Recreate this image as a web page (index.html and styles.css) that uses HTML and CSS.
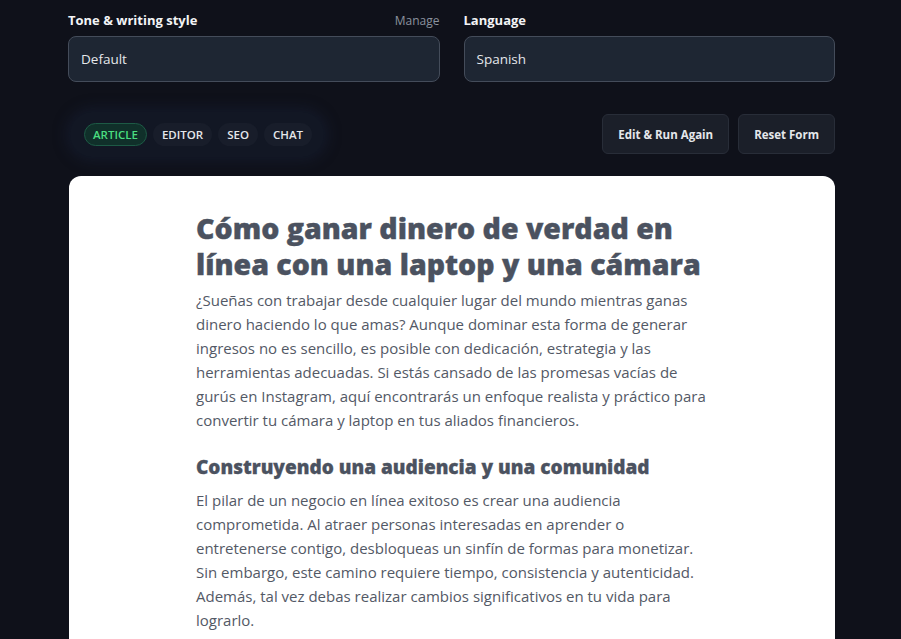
FILE: index.html
```html
<!DOCTYPE html>
<html lang="es">
<head>
<meta charset="utf-8">
<title>Article</title>
<link rel="stylesheet" href="styles.css">
</head>
<body>
<div class="page">
  <div class="fields">
    <div class="field">
      <div class="label-row"><span class="label">Tone &amp; writing style</span><span class="manage">Manage</span></div>
      <div class="input">Default</div>
    </div>
    <div class="field">
      <div class="label-row"><span class="label">Language</span></div>
      <div class="input">Spanish</div>
    </div>
  </div>
  <div class="toolbar">
    <div class="tabs">
      <span class="tab active">ARTICLE</span>
      <span class="tab">EDITOR</span>
      <span class="tab">SEO</span>
      <span class="tab">CHAT</span>
    </div>
    <div class="actions">
      <button class="btn">Edit &amp; Run Again</button>
      <button class="btn">Reset Form</button>
    </div>
  </div>
  <div class="card">
    <article class="prose">
      <h1>Cómo ganar dinero de verdad en línea con una laptop y una cámara</h1>
      <p>¿Sueñas con trabajar desde cualquier lugar del mundo mientras ganas dinero haciendo lo que amas? Aunque dominar esta forma de generar ingresos no es sencillo, es posible con dedicación, estrategia y las herramientas adecuadas. Si estás cansado de las promesas vacías de gurús en Instagram, aquí encontrarás un enfoque realista y práctico para convertir tu cámara y laptop en tus aliados financieros.</p>
      <h2>Construyendo una audiencia y una comunidad</h2>
      <p>El pilar de un negocio en línea exitoso es crear una audiencia comprometida. Al atraer personas interesadas en aprender o entretenerse contigo, desbloqueas un sinfín de formas para monetizar. Sin embargo, este camino requiere tiempo, consistencia y autenticidad. Además, tal vez debas realizar cambios significativos en tu vida para lograrlo.</p>
    </article>
  </div>
</div>
</body>
</html>
```
FILE: styles.css
```css
html, body {
  margin: 0;
  padding: 0;
  background: #0f111a;
  font-family: "Open Sans", "Noto Sans", sans-serif;
  color: #f3f4f6;
  overflow: hidden;
}
.page {
  width: 767px;
  margin: 0 0 0 68px;
  padding-top: 11px;
}
.fields {
  display: grid;
  grid-template-columns: 1fr 1fr;
  gap: 24px;
}
.label-row {
  display: flex;
  justify-content: space-between;
  align-items: baseline;
  height: 18px;
  margin-bottom: 7px;
}
.label {
  font-size: 13px;
  font-weight: 700;
  color: #f3f4f6;
}
.manage {
  font-size: 12px;
  color: #8b929e;
}
.input {
  box-sizing: border-box;
  height: 46px;
  border: 1px solid #444c5a;
  border-radius: 8px;
  background: #1e2633;
  padding: 0 12px;
  display: flex;
  align-items: center;
  font-size: 13.5px;
  color: #e5e7eb;
}
.toolbar {
  display: flex;
  justify-content: space-between;
  align-items: center;
  margin-top: 32px;
  height: 40px;
}
.tabs {
  display: flex;
  gap: 6px;
  padding: 11px 12px 11px 14px;
  margin-left: 2px;
  border-radius: 24px;
  background: #121724;
  box-shadow: 0 0 14px 4px rgba(30, 40, 70, 0.35);
}
.tab {
  font-size: 11.5px;
  font-weight: 600;
  color: #e5e7eb;
  background: #181d2a;
  padding: 3px 8px;
  border-radius: 12px;
  border: 1px solid transparent;
  line-height: 15px;
}
.tab.active {
  color: #4ade80;
  background: #10302a;
  border-color: #1d5a45;
}
.actions {
  display: flex;
  gap: 9px;
}
.btn {
  height: 40px;
  padding: 0 15px;
  font-family: inherit;
  font-size: 11.5px;
  font-weight: 700;
  color: #e5e7eb;
  background: #1b1f29;
  border: 1px solid #282d38;
  border-radius: 6px;
}
.card {
  margin-top: 22px;
  margin-left: 1px;
  background: #ffffff;
  border-radius: 12px;
  height: 480px;
  padding-top: 34px;
}
.prose {
  width: 516px;
  margin-left: 127px;
  color: #535966;
}
.prose h1 {
  font-size: 28.5px;
  font-weight: 800;
  line-height: 36px;
  margin: 0 0 6px;
  color: #4b5260;
  -webkit-text-stroke: 0.4px #4b5260;
}
.prose p {
  font-size: 15px;
  line-height: 24px;
  margin: 0;
}
.prose h2 {
  font-size: 19px;
  font-weight: 800;
  line-height: 26px;
  margin: 22px 0 8px;
  color: #4b5260;
  -webkit-text-stroke: 0.3px #4b5260;
}
```
